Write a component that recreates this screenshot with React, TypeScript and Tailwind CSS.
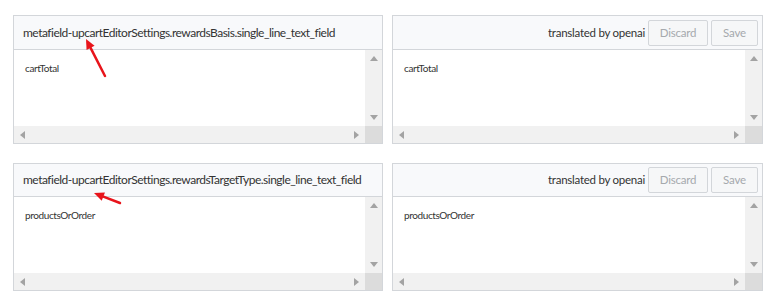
import React from 'react';

const font = { fontFamily: 'Lato, "Open Sans", sans-serif' };

function TriUp() {
  return (
    <svg width="8" height="5" viewBox="0 0 8 5" className="fill-[#a3a3a3]">
      <path d="M0 5 L4 0 L8 5 Z" />
    </svg>
  );
}
function TriDown() {
  return (
    <svg width="8" height="5" viewBox="0 0 8 5" className="fill-[#a3a3a3]">
      <path d="M0 0 L8 0 L4 5 Z" />
    </svg>
  );
}
function TriLeft() {
  return (
    <svg width="5" height="8" viewBox="0 0 5 8" className="fill-[#a3a3a3]">
      <path d="M5 0 L5 8 L0 4 Z" />
    </svg>
  );
}
function TriRight() {
  return (
    <svg width="5" height="8" viewBox="0 0 5 8" className="fill-[#a3a3a3]">
      <path d="M0 0 L5 4 L0 8 Z" />
    </svg>
  );
}

function Editor({ value }: { value: string }) {
  return (
    <div className="flex h-[93px] flex-col">
      <div className="flex flex-1">
        <div className="flex-1 pl-[11px] pt-[11px] text-[10px] tracking-[-0.4px] text-[#333]">{value}</div>
        <div className="flex w-[17px] flex-col items-center justify-between bg-[#f1f1f1] py-[6px]">
          <TriUp />
          <TriDown />
        </div>
      </div>
      <div className="flex h-[17px]">
        <div className="flex flex-1 items-center justify-between bg-[#f1f1f1] px-[6px]">
          <TriLeft />
          <TriRight />
        </div>
        <div className="w-[17px] bg-[#dcdcdc]" />
      </div>
    </div>
  );
}

function SourcePanel({ title, value, h }: { title: string; value: string; h: string }) {
  return (
    <div className="border border-[#d3d6da] bg-white">
      <div className={`flex items-center whitespace-nowrap border-b border-[#d3d6da] bg-[#f8f9fb] px-[9px] text-[12px] tracking-[-0.5px] text-[#333] ${h}`}>
        {title}
      </div>
      <Editor value={value} />
    </div>
  );
}

function TargetPanel({ value, h }: { value: string; h: string }) {
  return (
    <div className="border border-[#d3d6da] bg-white">
      <div className={`flex items-center justify-end gap-[3px] whitespace-nowrap border-b border-[#d3d6da] bg-[#f8f9fb] pr-[4px] ${h}`}>
        <span className="text-[11.5px] tracking-[-0.25px] text-[#333]">translated by openai</span>
        <button className="h-[26px] w-[60px] rounded-[2px] border border-[#d3d6da] bg-[#f6f7f8] text-[11.5px] tracking-[-0.2px] text-[#a5a9ad]">
          Discard
        </button>
        <button className="h-[26px] w-[47px] rounded-[2px] border border-[#d3d6da] bg-[#f6f7f8] text-[11.5px] tracking-[-0.2px] text-[#a5a9ad]">
          Save
        </button>
      </div>
      <Editor value={value} />
    </div>
  );
}

function Arrow({ x1, y1, x2, y2 }: { x1: number; y1: number; x2: number; y2: number }) {
  const a = Math.atan2(y1 - y2, x1 - x2);
  const len = 10;
  const w = 4.5;
  const bx = x1 - Math.cos(a) * len;
  const by = y1 - Math.sin(a) * len;
  const p1 = `${bx + Math.sin(a) * w},${by - Math.cos(a) * w}`;
  const p2 = `${bx - Math.sin(a) * w},${by + Math.cos(a) * w}`;
  return (
    <g>
      <line x1={x2} y1={y2} x2={bx} y2={by} stroke="#e8141b" strokeWidth="2.5" strokeLinecap="round" />
      <polygon points={`${x1},${y1} ${p1} ${p2}`} fill="#e8141b" />
    </g>
  );
}

export default function App() {
  return (
    <div className="relative h-[302px] w-[776px] bg-white px-[13px] pt-[15px]" style={font}>
      <div className="grid grid-cols-[370px_371px] gap-x-[9px]">
        <SourcePanel
          title="metafield-upcartEditorSettings.rewardsBasis.single_line_text_field"
          value="cartTotal"
          h="h-[34px]"
        />
        <TargetPanel value="cartTotal" h="h-[34px]" />
      </div>
      <div className="mt-[19px] grid grid-cols-[370px_371px] gap-x-[9px]">
        <SourcePanel
          title="metafield-upcartEditorSettings.rewardsTargetType.single_line_text_field"
          value="productsOrOrder"
          h="h-[33px]"
        />
        <TargetPanel value="productsOrOrder" h="h-[33px]" />
      </div>
      <svg className="pointer-events-none absolute left-0 top-0" width="776" height="302">
        <Arrow x1={86} y1={39} x2={105} y2={76} />
        <Arrow x1={94} y1={193} x2={120} y2={203} />
      </svg>
    </div>
  );
}
